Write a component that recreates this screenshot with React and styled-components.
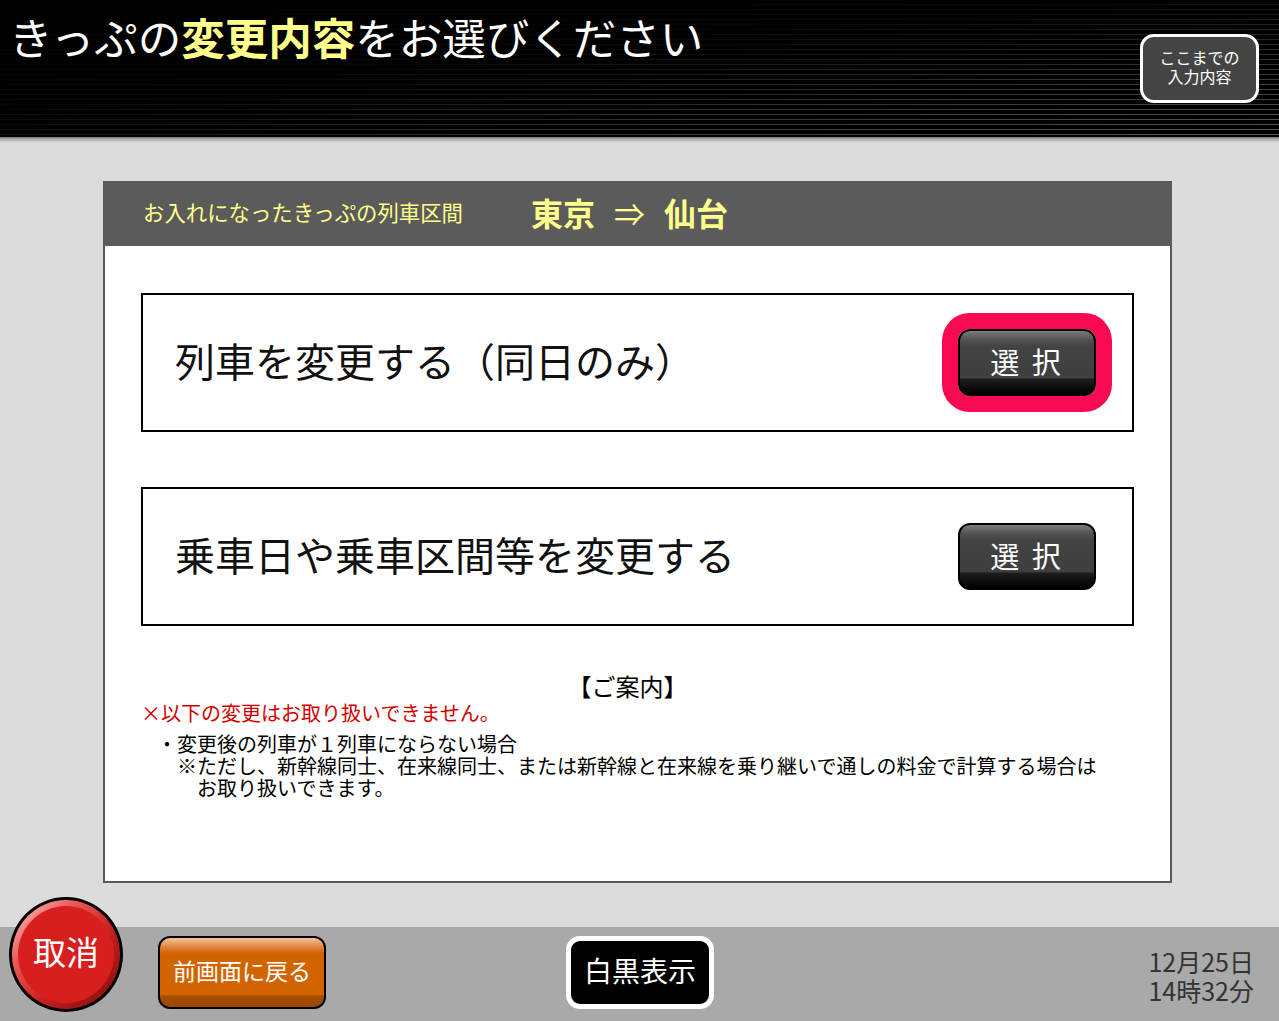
import React from "react";
import styled, { createGlobalStyle, css } from "styled-components";

const GlobalStyle = createGlobalStyle`
  html, body { margin: 0; padding: 0; }
  body {
    background: #dcdcdc;
    font-family: "Noto Sans CJK JP", "Noto Sans", sans-serif;
  }
  button { font-family: inherit; cursor: pointer; }
`;

const Page = styled.div`
  width: 1279px;
  height: 1021px;
  display: flex;
  flex-direction: column;
  overflow: hidden;
`;

const Header = styled.header`
  height: 137px;
  flex: none;
  box-sizing: border-box;
  padding: 0 20px 0 9px;
  display: flex;
  justify-content: space-between;
  align-items: flex-start;
  background:
    linear-gradient(to bottom right, rgba(0,0,0,1) 0%, rgba(0,0,0,0.92) 40%, rgba(0,0,0,0.3) 80%, rgba(0,0,0,0) 100%),
    repeating-linear-gradient(to bottom, #000 0px, #000 4px, #5a5a5a 4px, #5a5a5a 5px);
`;

const HeaderEdge = styled.div`
  height: 5px;
  flex: none;
  background: linear-gradient(to bottom, #7a7a7a, #b0b0b0 50%, #d2d2d2);
`;

const Title = styled.h1`
  margin: 11px 0 0;
  font-size: 43.5px;
  font-weight: 400;
  line-height: 52px;
  color: #fff;
  white-space: nowrap;
`;

const TitleEm = styled.span`
  color: #ffff8c;
  font-weight: 700;
`;

const SummaryButton = styled.button`
  margin-top: 34px;
  width: 119px;
  height: 69px;
  box-sizing: border-box;
  border: 3px solid #fff;
  border-radius: 14px;
  background: #444;
  color: #fff;
  font-size: 16px;
  line-height: 19px;
  padding: 0 0 3px;
  display: flex;
  flex-direction: column;
  align-items: center;
  justify-content: center;
`;

const Main = styled.main`
  flex: 1;
  padding: 39px 0 0 103px;
`;

const Panel = styled.section`
  width: 1069px;
  height: 702px;
  box-sizing: border-box;
  border: 2px solid #5a5a5a;
  background: #fff;
  display: flex;
  flex-direction: column;
`;

const PanelHeader = styled.div`
  height: 63px;
  flex: none;
  box-sizing: border-box;
  padding: 0 0 5px 38px;
  background: #5b5b5b;
  display: flex;
  align-items: center;
  color: #ffff8c;
`;

const RouteLabel = styled.span`
  font-size: 21.4px;
  line-height: 1;
  width: 388px;
`;

const Route = styled.span`
  display: flex;
  align-items: center;
  gap: 19px;
  font-size: 32px;
  font-weight: 700;
  line-height: 1;
`;

const Arrow = styled.span`
  font-weight: 400;
  font-size: 31px;
`;

const PanelBody = styled.div`
  padding: 47px 36px 0 36px;
  display: flex;
  flex-direction: column;
  gap: 55px;
`;

const OptionCard = styled.div`
  height: 139px;
  box-sizing: border-box;
  border: 2px solid #000;
  display: flex;
  align-items: center;
  justify-content: space-between;
  padding: 0 36px 0 32px;
`;

const OptionLabel = styled.span`
  font-size: 40px;
  line-height: 1;
  color: #111;
  padding-bottom: 6px;
`;

const SelectButton = styled.button`
  width: 138px;
  height: 67px;
  box-sizing: border-box;
  border: 2px solid #000;
  border-radius: 12px;
  padding: 0 0 4px;
  color: #fff;
  font-size: 29px;
  letter-spacing: 3px;
  background: linear-gradient(
    to bottom,
    #7c7c7c 0%,
    #525252 14%,
    #434343 24%,
    #3f3f3f 74%,
    #1c1c1c 77%,
    #000 100%
  );
  ${(p) =>
    p.$focused &&
    css`
      box-shadow: 0 0 0 16px #f80a52;
    `}
`;

const Guide = styled.div`
  padding: 45px 36px 0 36px;
  color: #000;
`;

const GuideTitle = styled.div`
  text-align: center;
  font-size: 24px;
  line-height: 30px;
  padding-right: 20px;
`;

const Warning = styled.div`
  color: #d00000;
  font-size: 20px;
  line-height: 24px;
`;

const GuideList = styled.div`
  margin-top: 8px;
  padding-left: 16px;
  font-size: 20px;
  line-height: 22px;
`;

const Note = styled.div`
  padding-left: 40px;
  text-indent: -20px;
`;

const Footer = styled.footer`
  height: 94px;
  flex: none;
  box-sizing: border-box;
  background: #a9a9a9;
  display: flex;
  align-items: flex-end;
  padding: 0 25px 9px 9px;
`;

const CancelButton = styled.button`
  width: 114px;
  height: 115px;
  flex: none;
  box-sizing: border-box;
  border: 3px solid #000;
  border-radius: 50%;
  padding: 6px;
  display: flex;
  background: linear-gradient(135deg, #ffc8c8 0%, #ea5a5a 30%, #c81e1e 60%, #7a0c0c 100%);
`;

const CancelFace = styled.span`
  flex: 1;
  border-radius: 50%;
  background: #d81f1f;
  color: #fff;
  font-size: 33px;
  padding-bottom: 7px;
  display: flex;
  align-items: center;
  justify-content: center;
`;

const BackButton = styled.button`
  margin: 0 0 3px 35px;
  width: 168px;
  height: 73px;
  box-sizing: border-box;
  border: 2px solid #000;
  border-radius: 12px;
  padding: 0 0 5px;
  color: #fff;
  font-size: 23px;
  background: linear-gradient(
    to bottom,
    #f4c39a 0%,
    #e38a45 12%,
    #d26400 22%,
    #d26400 82%,
    #a64e00 84%,
    #9a4700 100%
  );
`;

const MonoButton = styled.button`
  margin: 0 0 3px 240px;
  width: 148px;
  height: 73px;
  box-sizing: border-box;
  border: 5px solid #fff;
  border-radius: 14px;
  padding: 0 0 5px;
  background: #000;
  color: #fff;
  font-size: 28px;
`;

const DateTime = styled.div`
  margin: 0 0 7px auto;
  color: #333;
  font-size: 25px;
  line-height: 29px;
  text-align: right;
`;

const options = [
  { label: "列車を変更する（同日のみ）", focused: true },
  { label: "乗車日や乗車区間等を変更する", focused: false },
];

export default function App() {
  return (
    <>
      <GlobalStyle />
      <Page>
        <Header>
          <Title>
            きっぷの<TitleEm>変更内容</TitleEm>をお選びください
          </Title>
          <SummaryButton>
            <span>ここまでの</span>
            <span>入力内容</span>
          </SummaryButton>
        </Header>
        <HeaderEdge />
        <Main>
          <Panel>
            <PanelHeader>
              <RouteLabel>お入れになったきっぷの列車区間</RouteLabel>
              <Route>
                <span>東京</span>
                <Arrow>⇒</Arrow>
                <span>仙台</span>
              </Route>
            </PanelHeader>
            <PanelBody>
              {options.map((o) => (
                <OptionCard key={o.label}>
                  <OptionLabel>{o.label}</OptionLabel>
                  <SelectButton $focused={o.focused}>選 択</SelectButton>
                </OptionCard>
              ))}
            </PanelBody>
            <Guide>
              <GuideTitle>【ご案内】</GuideTitle>
              <Warning>×以下の変更はお取り扱いできません。</Warning>
              <GuideList>
                <div>・変更後の列車が１列車にならない場合</div>
                <Note>
                  ※ただし、新幹線同士、在来線同士、または新幹線と在来線を乗り継いで通しの料金で計算する場合は
                  <br />
                  お取り扱いできます。
                </Note>
              </GuideList>
            </Guide>
          </Panel>
        </Main>
        <Footer>
          <CancelButton>
            <CancelFace>取消</CancelFace>
          </CancelButton>
          <BackButton>前画面に戻る</BackButton>
          <MonoButton>白黒表示</MonoButton>
          <DateTime>
            <div>12月25日</div>
            <div>14時32分</div>
          </DateTime>
        </Footer>
      </Page>
    </>
  );
}
